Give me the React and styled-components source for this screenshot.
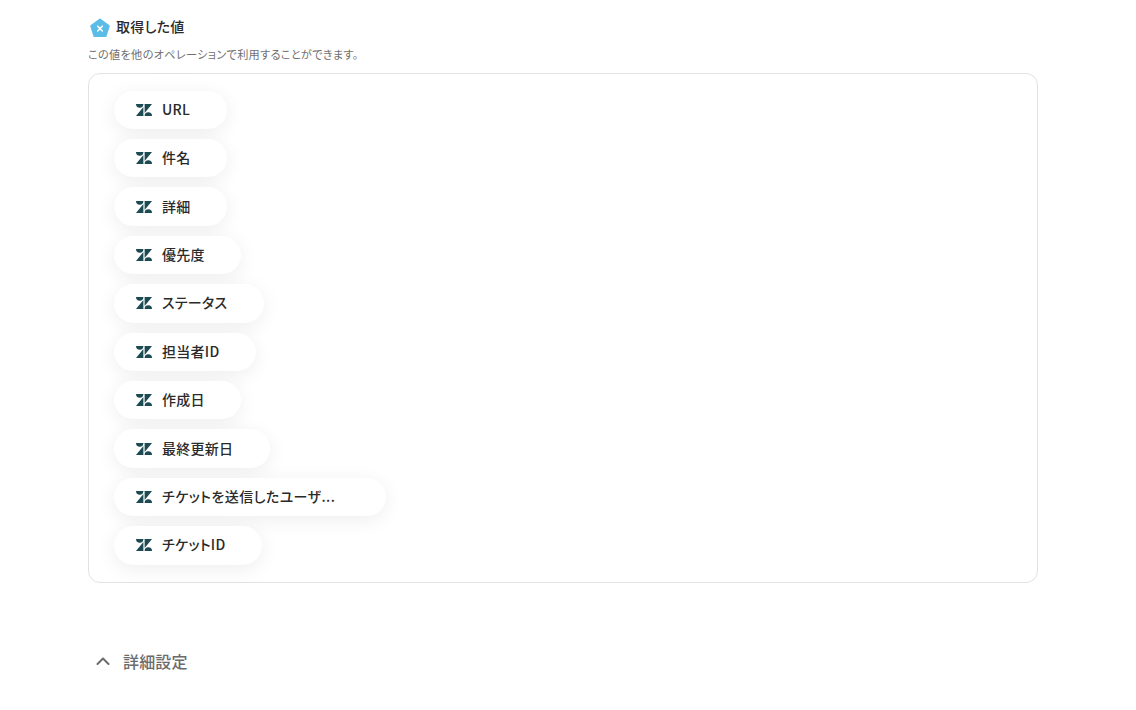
import * as React from "react";
import styled, { createGlobalStyle } from "styled-components";

const outputs = [
  { label: "URL" },
  { label: "件名" },
  { label: "詳細" },
  { label: "優先度" },
  { label: "ステータス" },
  { label: "担当者ID" },
  { label: "作成日" },
  { label: "最終更新日" },
  { label: "チケットを送信したユーザ...", truncated: true },
  { label: "チケットID" },
];

function ZendeskIcon() {
  return (
    <IconSvg viewBox="0 0 16 12" aria-hidden="true">
      <path fill="#1b4a52" d="M7.4 2.9V12H0z" />
      <path fill="#1b4a52" d="M7.4 0a3.7 3.7 0 0 1-7.4 0z" />
      <path fill="#1b4a52" d="M8.6 9.1V0H16z" />
      <path fill="#1b4a52" d="M8.6 12a3.7 3.7 0 0 1 7.4 0z" />
    </IconSvg>
  );
}

function App() {
  return (
    <Page>
      <GlobalStyle />
      <Heading>
        <BadgeSvg viewBox="0 0 20 20" aria-hidden="true">
          <path
            fill="#5bbce8"
            stroke="#5bbce8"
            strokeWidth="2"
            strokeLinejoin="round"
            d="M10 1.5 18.8 8 15.6 18H4.4L1.2 8z"
          />
          <path
            stroke="#fff"
            strokeWidth="1.6"
            strokeLinecap="round"
            d="M7.7 8.2 12.3 13M12.3 8.2 7.7 13"
          />
        </BadgeSvg>
        <HeadingText>取得した値</HeadingText>
      </Heading>
      <Note>この値を他のオペレーションで利用することができます。</Note>
      <OutputCard>
        {outputs.map((item) => (
          <Pill key={item.label} $truncated={item.truncated}>
            <ZendeskIcon />
            <PillLabel $truncated={item.truncated}>{item.label}</PillLabel>
          </Pill>
        ))}
      </OutputCard>
      <Advanced>
        <svg width="16" height="16" viewBox="0 0 16 16" aria-hidden="true">
          <path
            fill="none"
            stroke="#6b6b6b"
            strokeWidth="2"
            strokeLinecap="round"
            strokeLinejoin="round"
            d="M2.5 11 8 5.5l5.5 5.5"
          />
        </svg>
        <AdvancedText>詳細設定</AdvancedText>
      </Advanced>
    </Page>
  );
}

const GlobalStyle = createGlobalStyle`
  html, body {
    margin: 0;
    padding: 0;
    background: #fff;
    overflow: hidden;
  }
  body {
    font-family: "Noto Sans CJK JP", "Noto Sans", sans-serif;
    font-feature-settings: "palt";
    color: #2a2a2a;
  }
`;

const Page = styled.div`
  width: 950px;
  height: 710px;
  margin-left: 88px;
  padding-top: 15px;
  box-sizing: border-box;
`;

const Heading = styled.div`
  display: flex;
  align-items: center;
  gap: 6px;
  height: 22px;
  padding-left: 2px;
`;

const BadgeSvg = styled.svg`
  width: 20px;
  height: 20px;
  margin-top: 3px;
  flex: none;
`;

const HeadingText = styled.div`
  font-size: 14px;
  font-weight: 500;
  letter-spacing: 0.02em;
  line-height: 22px;
  color: #2a2a2a;
`;

const Note = styled.div`
  margin-top: 8px;
  font-size: 11.2px;
  letter-spacing: 0.025em;
  line-height: 18px;
  color: #6f6f6f;
`;

const OutputCard = styled.div`
  margin-top: 10px;
  box-sizing: border-box;
  height: 510px;
  border: 1px solid #e2e2e2;
  border-radius: 12px;
  padding: 16.6px 25px;
  display: flex;
  flex-direction: column;
  align-items: flex-start;
  gap: 10px;
`;

const Pill = styled.div`
  display: flex;
  align-items: center;
  gap: 10px;
  height: 38.4px;
  padding: 0 ${(props) => (props.$truncated ? "51px" : "36.6px")} 0 22px;
  border-radius: 20px;
  background: #fff;
  box-shadow: 0 4px 20px rgba(0, 0, 0, 0.07);
`;

const IconSvg = styled.svg`
  width: 16px;
  height: 12px;
  flex: none;
`;

const PillLabel = styled.span`
  padding-bottom: 2px;
  font-size: 14px;
  font-weight: 500;
  letter-spacing: ${(props) => (props.$truncated ? "0.03em" : "0.02em")};
  color: #2a2a2a;
  white-space: nowrap;
`;

const Advanced = styled.div`
  margin-top: 66px;
  display: flex;
  align-items: center;
  gap: 12px;
  padding-left: 7px;
`;

const AdvancedText = styled.div`
  font-size: 16px;
  font-weight: 500;
  letter-spacing: 0.01em;
  line-height: 24px;
  color: #6b6b6b;
`;

export default App;
